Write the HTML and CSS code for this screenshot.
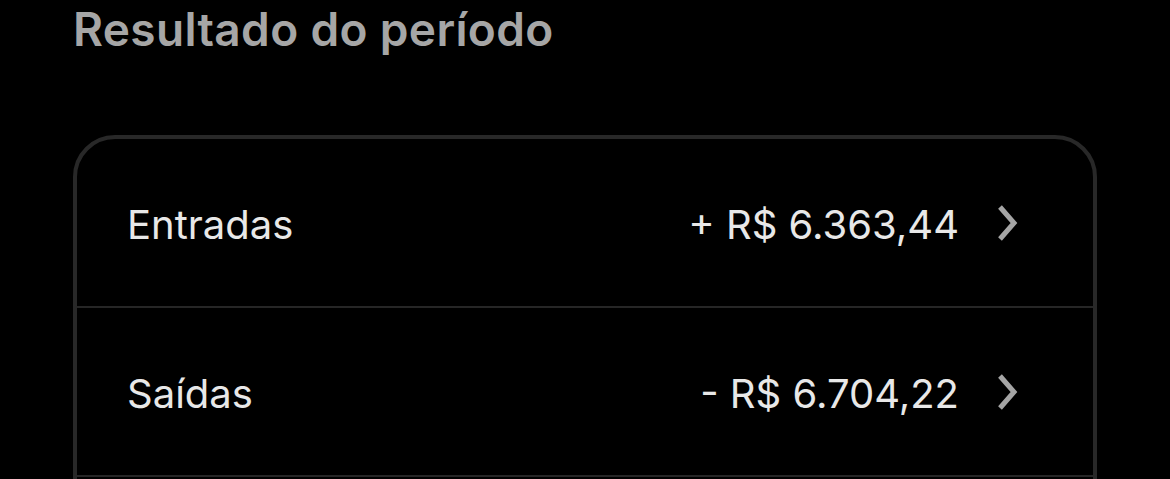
FILE: index.html
```html
<!DOCTYPE html>
<html lang="pt-BR">
<head>
    <meta charset="UTF-8">
    <meta name="viewport" content="width=device-width, initial-scale=1.0">
    <title>Resultado do período</title>
    <link rel="stylesheet" href="styles.css">
</head>
<body>
    <div class="page">
        <h2 class="title">Resultado do período</h2>

        <div class="card">
            <div class="row">
                <span class="label">Entradas</span>
                <span class="value">+ R$ 6.363,44</span>
                <svg class="chevron" viewBox="0 0 24 40" width="24" height="40">
                    <path d="M4 4 L18 20 L4 36" fill="none" stroke="#a5a5a5" stroke-width="5"/>
                </svg>
            </div>
            <div class="row">
                <span class="label">Saídas</span>
                <span class="value">- R$ 6.704,22</span>
                <svg class="chevron" viewBox="0 0 24 40" width="24" height="40">
                    <path d="M4 4 L18 20 L4 36" fill="none" stroke="#a5a5a5" stroke-width="5"/>
                </svg>
            </div>
        </div>
    </div>
</body>
</html>
```

FILE: styles.css
```css
body {
    margin: 0;
    background: #000;
    font-family: Inter, "Noto Sans", sans-serif;
    overflow: hidden;
}
.page {
    padding: 0 73px;
}
.title {
    margin: 0;
    padding-top: 1px;
    font-size: 46px;
    line-height: 56px;
    font-weight: 600;
    color: #a6a6a6;
    letter-spacing: 0.35px;
}
.card {
    margin-top: 78px;
    padding-bottom: 80px;
    border: 4px solid #282828;
    border-radius: 42px;
}
.row {
    display: flex;
    align-items: center;
    height: 164px;
    padding: 3px 73px 0 50px;
    border-bottom: 2px solid #262626;
    color: #e8e8e8;
    font-size: 40px;
}
.label {
    flex: 1;
}
.value {
    margin-right: 37px;
}
.chevron {
    display: block;
    margin-top: -2px;
}
```
